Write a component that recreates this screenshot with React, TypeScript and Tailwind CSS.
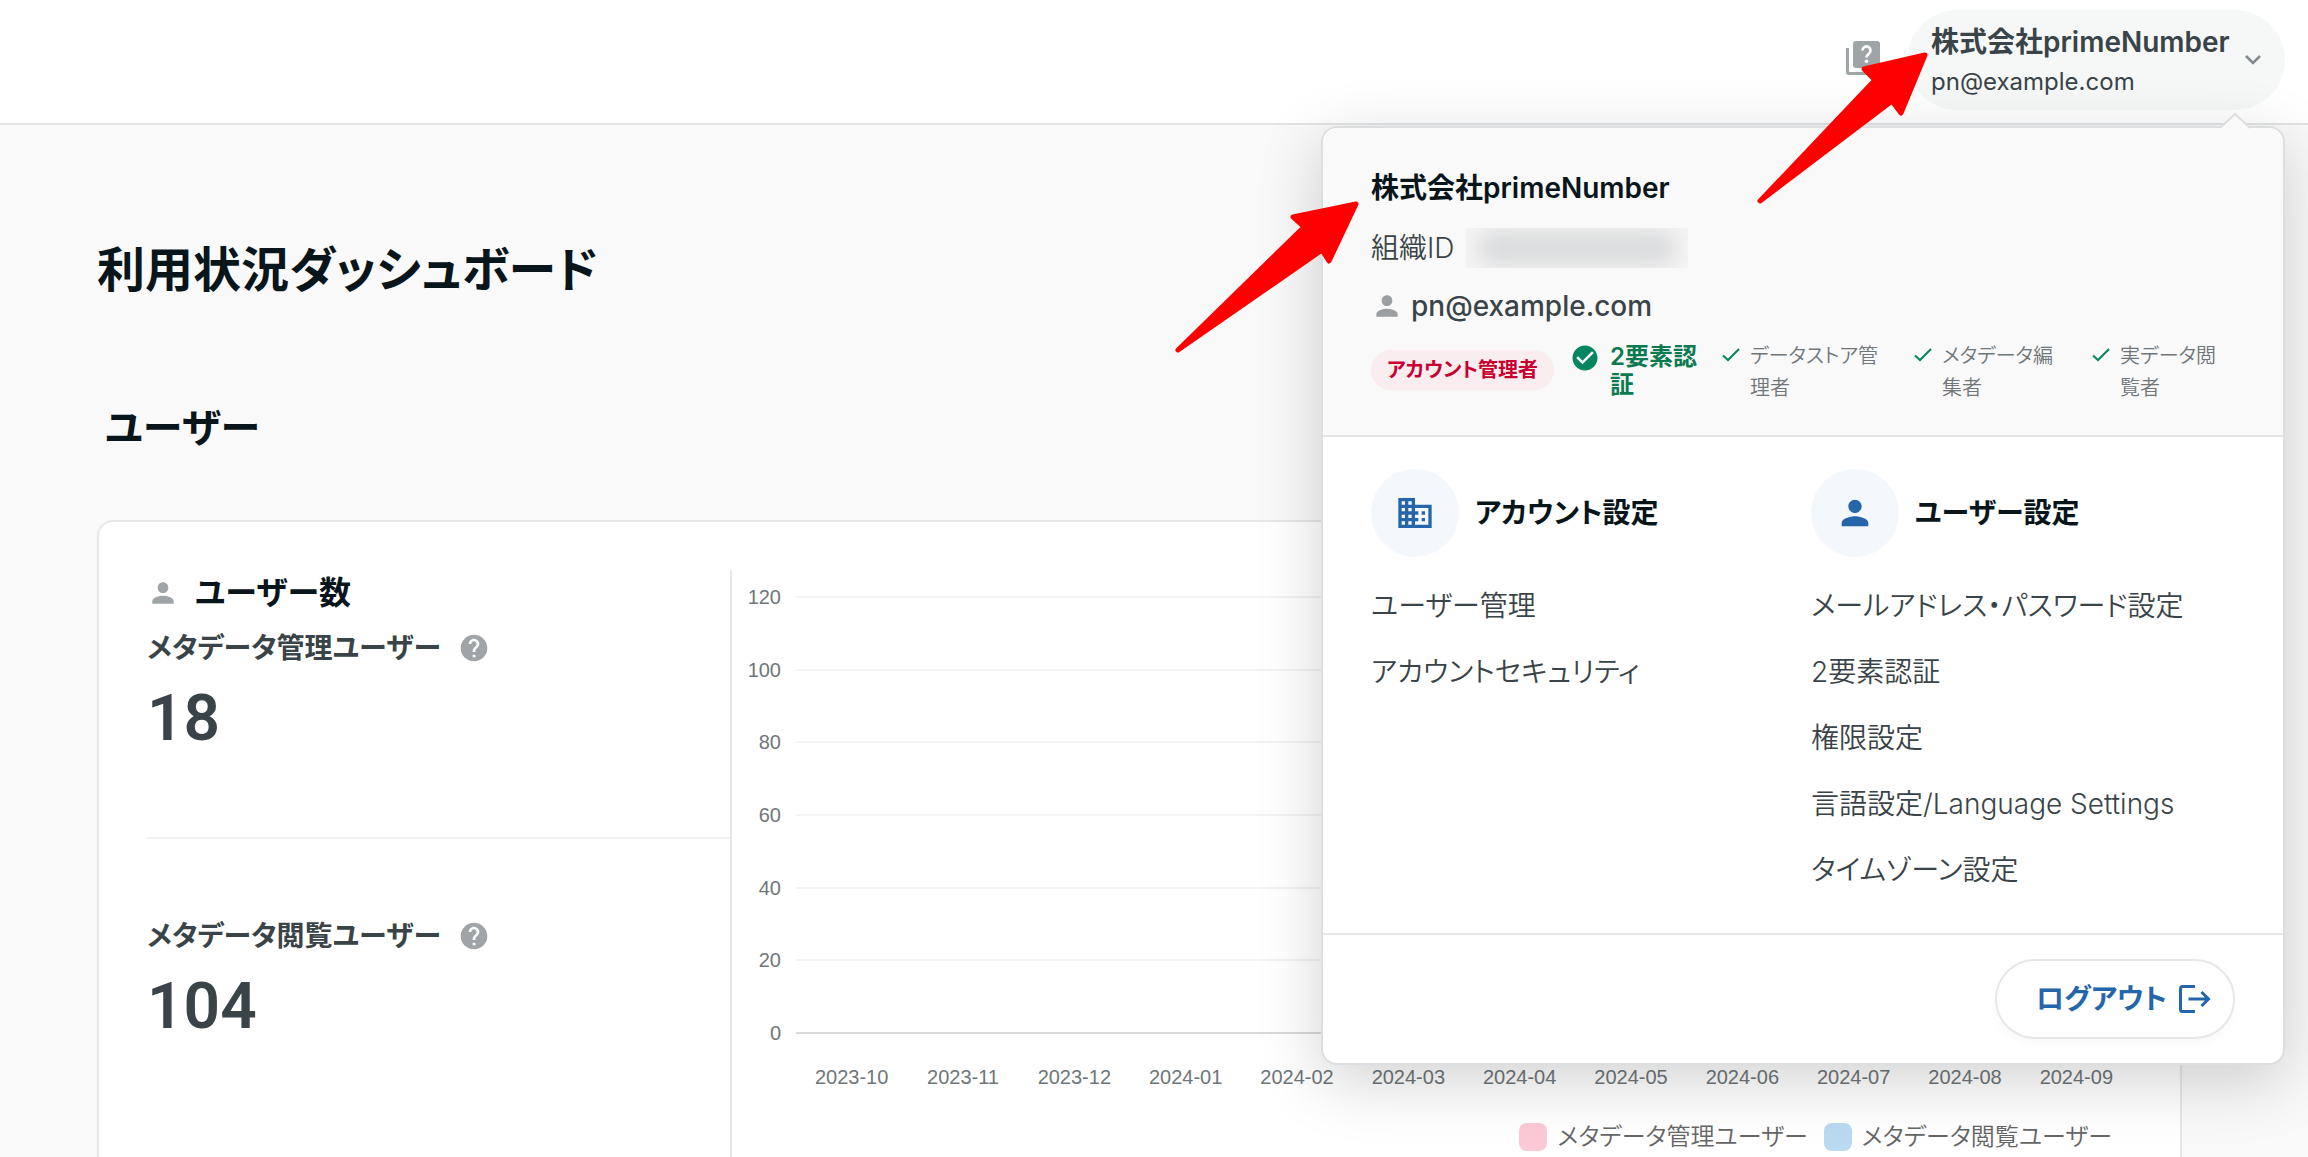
import type { ReactNode } from 'react';
import { MdBusiness, MdCheckCircle, MdHelp, MdPerson } from 'react-icons/md';

const accountLinks = ['ユーザー管理', 'アカウントセキュリティ'];
const userLinks = ['メールアドレス・パスワード設定', '2要素認証', '権限設定', '言語設定/Language Settings', 'タイムゾーン設定'];
const yTicks = [120, 100, 80, 60, 40, 20, 0];
const months = [
  '2023-10', '2023-11', '2023-12', '2024-01', '2024-02', '2024-03',
  '2024-04', '2024-05', '2024-06', '2024-07', '2024-08', '2024-09',
];

function IconQuiz() {
  return (
    <svg viewBox="0 0 34 34" className="size-[34px]" aria-hidden="true">
      <path d="M0 7h3v24h24v3H3a3 3 0 0 1-3-3z" fill="#9fa4a6" />
      <rect x="7" width="27" height="27" rx="3" fill="#9fa4a6" />
      <path d="M16.500 9.500a4 4 0 1 1 6.600 2.900c-1.700 1.500-2.600 2.100-2.600 4.100" fill="none" stroke="#fff" strokeWidth="2.600" />
      <circle cx="20.500" cy="20.300" r="1.800" fill="#fff" />
    </svg>
  );
}

function IconCheck() {
  return (
    <svg viewBox="0 0 18 14" className="mt-2 h-[14px] w-[18px] shrink-0" aria-hidden="true">
      <path d="M1 7.500 6 12 17 1" fill="none" stroke="#058560" strokeWidth="2" />
    </svg>
  );
}

function IconLogout() {
  return (
    <svg viewBox="0 0 32 28" className="h-7 w-8" fill="none" stroke="currentColor" strokeWidth="3" aria-hidden="true">
      <path d="M16 1.500H3.500a2 2 0 0 0-2 2v21a2 2 0 0 0 2 2H16M9.500 14h20M22.500 7l7 7-7 7" />
    </svg>
  );
}

function RoleItem({ className, children }: { className: string; children: ReactNode }) {
  return (
    <li className="flex gap-[10px]">
      <IconCheck />
      <span className={className}>{children}</span>
    </li>
  );
}

function SettingsColumn({ icon, title, links }: { icon: ReactNode; title: string; links: string[] }) {
  return (
    <section className="flex-1">
      <div className="mb-4 flex items-center gap-4">
        <span className="flex size-[88px] items-center justify-center rounded-full bg-[#f4f8fd] text-[#2466a9]">{icon}</span>
        <h3 className="text-[28px] font-semibold text-[#08151b]">{title}</h3>
      </div>
      <ul>
        {links.map((link) => (
          <li key={link}>
            <a href="#" className="block text-[28px] leading-[66px] font-[350] whitespace-nowrap">
              {link}
            </a>
          </li>
        ))}
      </ul>
    </section>
  );
}

function AccountMenu() {
  return (
    <div className="absolute top-[126px] right-[23px] z-10 w-[964px] rounded-2xl border-2 border-[#dcdedf] bg-white shadow-[0_16px_64px_rgba(0,0,0,0.18)]">
      <svg viewBox="0 0 30 16" className="absolute -top-[15px] right-[33px] h-4 w-[30px]" aria-hidden="true">
        <path d="M0 15 15 1l15 14v1H0z" fill="#f9f9f9" />
        <path d="M0 15 15 1l15 14" fill="none" stroke="#dcdedf" strokeWidth="2" />
      </svg>

      <div className="rounded-t-2xl border-b-2 border-[#e3e4e5] bg-[#f9f9f9] px-12 pt-10 pb-[31px]">
        <h2 className="text-[28px] leading-10 font-semibold text-[#08151b]">株式会社primeNumber</h2>
        <div className="mt-5 flex items-center gap-3 text-[28px] leading-10 font-[350]">
          <span>組織ID</span>
          <span className="h-10 w-[222px] overflow-hidden bg-[#f4f4f5] px-3 py-1">
            <span className="block h-8 rounded-full bg-[#d9dadb] blur-[10px]" />
          </span>
        </div>
        <div className="mt-[18px] flex items-center gap-2 text-[28px] leading-10 font-medium">
          <MdPerson className="size-8 text-[#9b9fa1]" />
          pn@example.com
        </div>
        <div className="mt-[14px] flex items-start">
          <span className="mt-[10px] rounded-full bg-[#f9edef] px-4 text-[20px] leading-10 font-semibold whitespace-nowrap text-[#c8002f]">
            アカウント管理者
          </span>
          <div className="mt-[3px] ml-4 flex gap-[10px]">
            <MdCheckCircle className="size-[30px] shrink-0 text-[#058560]" />
            <span className="w-[88px] text-[24px] leading-7 font-semibold text-[#0b7a50]">2要素認証</span>
          </div>
          <ul className="ml-6 flex gap-[34px] text-[20px] leading-8 font-[350] text-[#6f7679]">
            <RoleItem className="w-[130px]">データストア管理者</RoleItem>
            <RoleItem className="w-[116px]">メタデータ編集者</RoleItem>
            <RoleItem className="w-[100px]">実データ閲覧者</RoleItem>
          </ul>
        </div>
      </div>

      <div className="flex gap-4 px-12 pt-8 pb-[30px]">
        <SettingsColumn icon={<MdBusiness className="size-10" />} title="アカウント設定" links={accountLinks} />
        <SettingsColumn icon={<MdPerson className="size-10" />} title="ユーザー設定" links={userLinks} />
      </div>

      <div className="flex justify-end border-t-2 border-[#e6e7e8] px-12 py-6">
        <button
          type="button"
          className="flex h-20 w-60 items-center justify-end gap-3 rounded-full border-2 border-[#e6e7e8] bg-white pr-[22px] text-[28px] font-semibold text-[#2466a9] shadow-[0_4px_12px_rgba(0,0,0,0.03)]"
        >
          ログアウト
          <IconLogout />
        </button>
      </div>
    </div>
  );
}

function Header() {
  return (
    <header className="relative flex h-[125px] items-start justify-end gap-[27px] border-b-2 border-[#e1e3e4] bg-white pr-[23px]">
      <button type="button" aria-label="ヘルプ" className="mt-[41px]">
        <IconQuiz />
      </button>
      <button type="button" className="mt-[10px] flex h-[100px] w-[378px] items-center justify-between rounded-full bg-[#f6f8f8] px-6 text-left">
        <span className="flex flex-col pt-1">
          <span className="text-[28px] leading-10 font-semibold whitespace-nowrap">株式会社primeNumber</span>
          <span className="text-[24px] leading-10">pn@example.com</span>
        </span>
        <svg viewBox="0 0 16 10" className="h-[10px] w-4" aria-hidden="true">
          <path d="m1 1 7 7 7-7" fill="none" stroke="#84898d" strokeWidth="2.500" />
        </svg>
      </button>
      <AccountMenu />
    </header>
  );
}

function UserCount({ label, count }: { label: string; count: number }) {
  return (
    <div>
      <div className="flex items-center gap-[17px] text-[28px] leading-10 font-semibold">
        {label}
        <MdHelp className="size-8 text-[#9fa4a6]" />
      </div>
      <div className="mt-[9px] font-['Roboto',sans-serif] text-[64px] leading-[84px] font-semibold">{count}</div>
    </div>
  );
}

function UsersChart() {
  return (
    <div className="min-w-0 flex-1 pt-[17px] pl-2 font-['Liberation_Sans',sans-serif] text-[20px] text-[#6f7679]">
      <div className="flex h-[456px] flex-col justify-between">
        {yTicks.map((tick) => (
          <div key={tick} className="flex items-center gap-[15px] leading-5">
            <span className="w-[41px] text-right">{tick}</span>
            <span className={tick === 0 ? 'h-0.5 flex-1 bg-[#d8d9da]' : 'h-0.5 flex-1 bg-[#f3f3f4]'} />
          </div>
        ))}
      </div>
      <div className="mt-[18px] ml-14 grid grid-cols-12 text-center leading-8">
        {months.map((month) => (
          <span key={month}>{month}</span>
        ))}
      </div>
      <div className="mt-[26px] flex justify-end gap-4 pr-5 font-['Inter','Noto_Sans_CJK_JP',sans-serif] text-[24px] leading-9 font-[350] text-[#666666]">
        <span className="flex items-center gap-[10px]">
          <span className="size-7 rounded-lg bg-[#fccad6]" />
          メタデータ管理ユーザー
        </span>
        <span className="flex items-center gap-[10px]">
          <span className="size-7 rounded-lg bg-[#b9daf0]" />
          メタデータ閲覧ユーザー
        </span>
      </div>
    </div>
  );
}

// Red callout arrows drawn over the page
function Callouts() {
  return (
    <svg
      viewBox="0 0 780 360"
      className="pointer-events-none absolute top-0 right-[370px] z-20 h-[360px] w-[780px] fill-[#ff0000] stroke-[#ff0000]"
      strokeWidth="5"
      strokeLinejoin="round"
      aria-hidden="true"
    >
      <path d="M198 204 135 217l11 10L20 350l144-100 7 11z" />
      <path d="M767 55 706 69l11 11L602 201l132-100 9 12z" />
    </svg>
  );
}

export default function App() {
  return (
    <div
      lang="ja"
      className="relative h-screen overflow-hidden bg-[#f9f9f9] font-['Inter','Noto_Sans_CJK_JP',sans-serif] text-[#3a4448] [font-feature-settings:'palt']"
    >
      <Header />
      <main className="pr-[126px] pl-[97px]">
        <h1 className="pt-[109px] text-[48px] leading-[72px] font-semibold text-[#08151b]">利用状況ダッシュボード</h1>
        <h2 className="mt-[92px] pl-2 text-[40px] leading-[60px] font-semibold text-[#08151b]">ユーザー</h2>
        <div className="mt-[62px] flex h-[800px] rounded-2xl border-2 border-[#e6e7e8] bg-white p-12">
          <div className="w-[585px] shrink-0 border-r-2 border-[#e6e7e8]">
            <h3 className="flex items-center gap-4 text-[32px] leading-[46px] font-semibold text-[#08151b]">
              <MdPerson className="size-8 text-[#9fa4a6]" />
              ユーザー数
            </h3>
            <div className="mt-3 h-[211px] border-b-2 border-[#f1f1f2]">
              <UserCount label="メタデータ管理ユーザー" count={18} />
            </div>
            <div className="pt-[77px]">
              <UserCount label="メタデータ閲覧ユーザー" count={104} />
            </div>
          </div>
          <UsersChart />
        </div>
      </main>
      <Callouts />
    </div>
  );
}
